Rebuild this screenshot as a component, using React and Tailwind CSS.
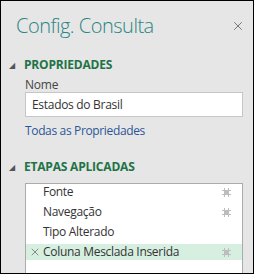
import { X } from 'lucide-react'

function Gear() {
  return (
    <svg width="9" height="9" viewBox="0 0 9 9" className="text-[#bdbdbd]">
      <g fill="currentColor">
        <rect x="0" y="2" width="9" height="1" />
        <rect x="0" y="6" width="9" height="1" />
        <rect x="2" y="0" width="1" height="9" />
        <rect x="6" y="0" width="1" height="9" />
        <rect x="3" y="3" width="3" height="3" />
      </g>
    </svg>
  )
}

const steps = [
  { name: 'Fonte', gear: true },
  { name: 'Navegação', gear: true },
  { name: 'Tipo Alterado', gear: false },
  { name: 'Coluna Mesclada Inserida', gear: true, active: true },
]

function Section({ title, children }) {
  return (
    <div>
      <div className="flex items-center gap-[9px] pl-[8px] h-[18px]">
        <span className="text-[8px] text-[#555] leading-none">◢</span>
        <span className="text-[12px] font-bold text-[#217346] tracking-[-0.2px]">{title}</span>
      </div>
      {children}
    </div>
  )
}

export default function App() {
  return (
    <div
      className="w-[254px] h-[274px] bg-[#e6e6e6] border border-black overflow-hidden"
      style={{ fontFamily: '"Open Sans", "Noto Sans", sans-serif' }}
    >
      <div className="flex items-center justify-between pl-[15px] pr-[8px] h-[55px] pb-[5px]">
        <h1 className="text-[20px] font-light text-[#2a8582] tracking-[-0.5px]">Config. Consulta</h1>
        <X size={14} strokeWidth={1.3} className="text-[#555]" />
      </div>
      <Section title="PROPRIEDADES">
        <div className="pl-[24px] pr-[10px]">
          <div className="text-[12px] text-[#444] mt-[4px] leading-[14px] tracking-[-0.2px]">Nome</div>
          <div className="h-[25px] bg-white border border-[#c6c6c6] flex items-center px-[6px] text-[12px] text-[#333] tracking-[-0.3px]">
            Estados do Brasil
          </div>
          <div className="text-[12px] text-[#2b5797] mt-[5px] leading-[18px] tracking-[-0.35px]">Todas as Propriedades</div>
        </div>
      </Section>
      <div className="mt-[18px]">
        <Section title="ETAPAS APLICADAS">
          <div className="ml-[24px] mr-[10px] mt-[7px] bg-white border border-[#ababab] border-b-0 h-[100px] flex flex-col gap-[4px]">
            {steps.map((s) => (
              <div
                key={s.name}
                className={`h-[16px] shrink-0 flex items-center pl-[4px] pr-[11px] text-[12px] text-[#333] tracking-[-0.3px] ${s.active ? 'bg-[#d7efe0]' : ''}`}
              >
                <span className="w-[13px] flex items-center">
                  {s.active && <X size={12} strokeWidth={1.3} className="text-[#555] -ml-[1px]" />}
                </span>
                <span className="flex-1">{s.name}</span>
                {s.gear && <Gear />}
              </div>
            ))}
          </div>
        </Section>
      </div>
    </div>
  )
}
